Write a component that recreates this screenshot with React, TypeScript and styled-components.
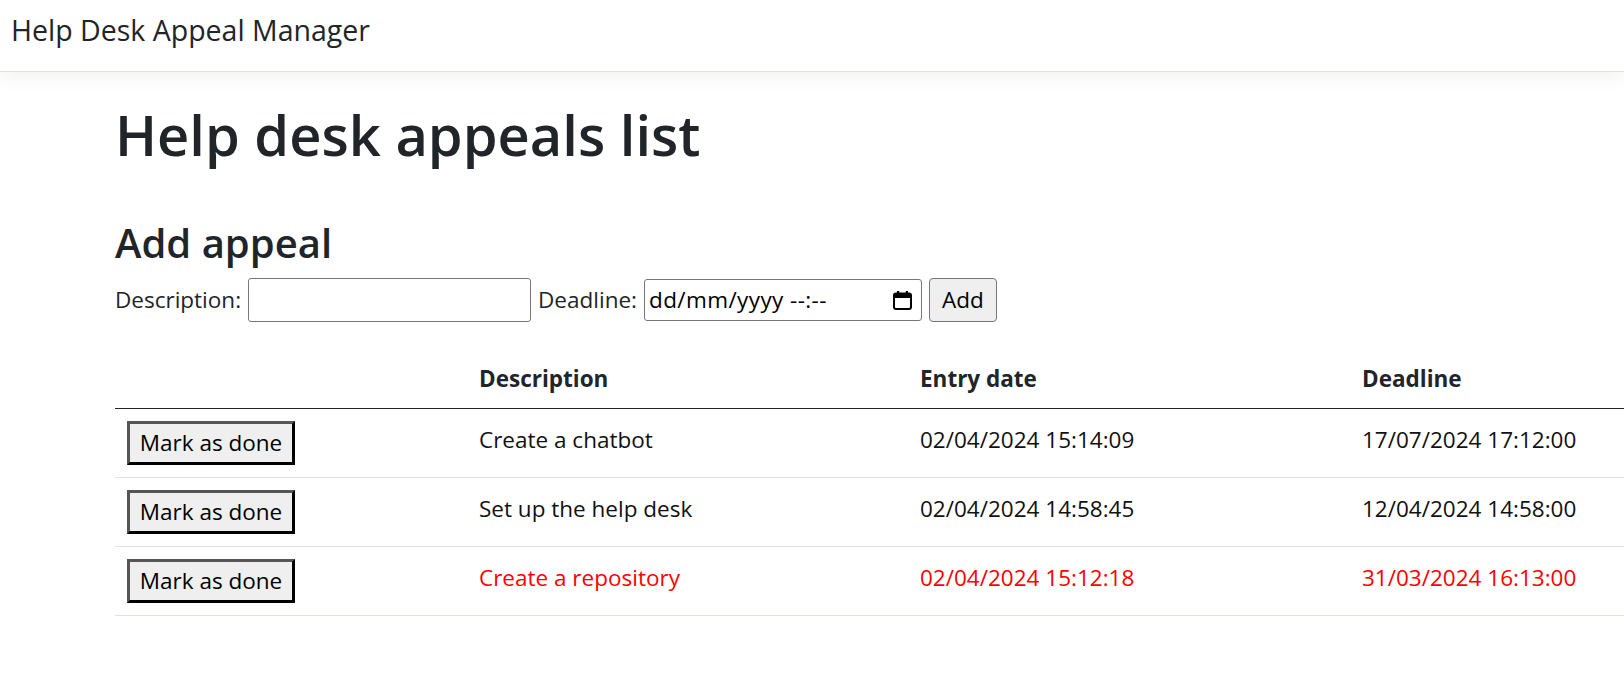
import React from "react";
import styled, { createGlobalStyle } from "styled-components";

const GlobalStyle = createGlobalStyle`
  html, body { margin: 0; padding: 0; overflow: hidden; background: #fff; }
  body {
    font-family: "Open Sans", "Noto Sans", sans-serif;
    color: #212529;
    font-size: 22.5px;
    line-height: 1.5;
  }
  * { box-sizing: border-box; }
`;

const NavBar = styled.header`
  height: 72px;
  padding: 16px 11px 0;
  border-bottom: 1px solid #dee2e6;
  box-shadow: 0 6px 18px rgba(0, 0, 0, 0.05);
`;

const Brand = styled.a`
  display: inline-block;
  font-size: 28.5px;
  line-height: 28.5px;
  color: #212529;
  text-decoration: none;
`;

const Main = styled.main`
  padding-left: 115px;
`;

const PageTitle = styled.h1`
  margin: 34px 0 0;
  font-size: 56px;
  line-height: 57px;
  font-weight: 600;
  color: #212529;
`;

const SectionTitle = styled.h2`
  margin: 60px 0 0;
  font-size: 40px;
  line-height: 40px;
  font-weight: 600;
  color: #212529;
`;

const AddForm = styled.form`
  margin-top: 15px;
  display: flex;
  align-items: center;
  gap: 7px;
  height: 44px;
`;

const FieldLabel = styled.label`
  color: #212529;
  white-space: nowrap;
`;

const TextField = styled.input`
  width: 283px;
  height: 44px;
  margin: 0;
  padding: 1px 4px;
  border: 1px solid #767676;
  border-radius: 3px;
  font: inherit;
  background: #fff;
`;

const DateField = styled.div`
  width: 278px;
  height: 42px;
  padding: 0 8px 0 4px;
  border: 1px solid #767676;
  border-radius: 3px;
  display: flex;
  align-items: center;
  justify-content: space-between;
  color: #000;
  background: #fff;
`;

const DateText = styled.span`
  white-space: nowrap;
  letter-spacing: 0.4px;
`;

const AddButton = styled.button`
  width: 68px;
  height: 44px;
  margin: 0;
  padding: 0;
  border: 1px solid #767676;
  border-radius: 4px;
  background: #efefef;
  font: inherit;
  color: #000;
`;

const Table = styled.table`
  margin-top: 26px;
  border-collapse: collapse;
  table-layout: fixed;
  width: 1677px;
  vertical-align: top;
`;

const HeadCell = styled.th`
  padding: 13px 12px 11px;
  text-align: left;
  font-weight: 700;
  line-height: 36px;
  color: #212529;
  border-bottom: 1px solid #212529;
`;

const Row = styled.tr`
  border-bottom: 1px solid #dee2e6;
`;

const Cell = styled.td<{ $overdue?: boolean }>`
  padding: 13px 12px 12px;
  line-height: 36px;
  vertical-align: top;
  color: ${(p) => (p.$overdue ? "#ff0000" : "#111")};
`;

const DoneButton = styled.button`
  display: block;
  width: 168px;
  height: 44px;
  margin: -1px 0 0;
  padding: 0;
  border: 3px solid;
  border-color: #555 #000 #000 #555;
  background: #efefef;
  font: inherit;
  line-height: 36px;
  color: #000;
`;

const CalendarIcon = () => (
  <svg width="21" height="21" viewBox="0 0 21 21" aria-hidden="true">
    <rect x="2" y="3.5" width="17" height="15.5" rx="2" fill="none" stroke="#000" strokeWidth="2" />
    <rect x="2" y="3.5" width="17" height="4.5" fill="#000" />
    <rect x="5" y="1" width="2.2" height="4" fill="#000" />
    <rect x="13.8" y="1" width="2.2" height="4" fill="#000" />
  </svg>
);

const appeals = [
  { id: 1, description: "Create a chatbot", entry: "02/04/2024 15:14:09", deadline: "17/07/2024 17:12:00", overdue: false },
  { id: 2, description: "Set up the help desk", entry: "02/04/2024 14:58:45", deadline: "12/04/2024 14:58:00", overdue: false },
  { id: 3, description: "Create a repository", entry: "02/04/2024 15:12:18", deadline: "31/03/2024 16:13:00", overdue: true },
];

export default function App() {
  return (
    <>
      <GlobalStyle />
      <NavBar>
        <Brand href="#">Help Desk Appeal Manager</Brand>
      </NavBar>
      <Main>
        <PageTitle>Help desk appeals list</PageTitle>
        <SectionTitle>Add appeal</SectionTitle>
        <AddForm onSubmit={(e) => e.preventDefault()}>
          <FieldLabel htmlFor="desc">Description:</FieldLabel>
          <TextField id="desc" type="text" />
          <FieldLabel>Deadline:</FieldLabel>
          <DateField>
            <DateText>dd/mm/yyyy --:--</DateText>
            <CalendarIcon />
          </DateField>
          <AddButton type="submit">Add</AddButton>
        </AddForm>
        <Table>
          <colgroup>
            <col style={{ width: 352 }} />
            <col style={{ width: 441 }} />
            <col style={{ width: 442 }} />
            <col style={{ width: 442 }} />
          </colgroup>
          <thead>
            <tr>
              <HeadCell></HeadCell>
              <HeadCell>Description</HeadCell>
              <HeadCell>Entry date</HeadCell>
              <HeadCell>Deadline</HeadCell>
            </tr>
          </thead>
          <tbody>
            {appeals.map((a) => (
              <Row key={a.id}>
                <Cell>
                  <DoneButton type="button">Mark as done</DoneButton>
                </Cell>
                <Cell $overdue={a.overdue}>{a.description}</Cell>
                <Cell $overdue={a.overdue}>{a.entry}</Cell>
                <Cell $overdue={a.overdue}>{a.deadline}</Cell>
              </Row>
            ))}
          </tbody>
        </Table>
      </Main>
    </>
  );
}
